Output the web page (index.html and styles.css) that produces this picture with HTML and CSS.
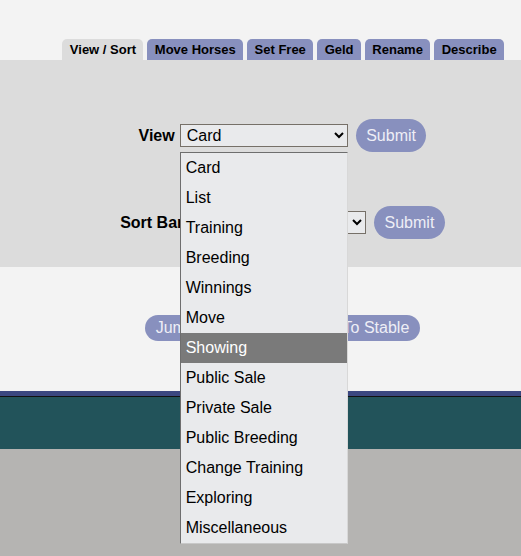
FILE: index.html
```html
<!DOCTYPE html>
<html>
<head>
<meta charset="utf-8">
<link rel="stylesheet" href="styles.css">
</head>
<body>
<div class="header">
  <nav class="tabs">
    <a class="tab active">View / Sort</a>
    <a class="tab">Move Horses</a>
    <a class="tab">Set Free</a>
    <a class="tab">Geld</a>
    <a class="tab">Rename</a>
    <a class="tab">Describe</a>
  </nav>
</div>
<div class="panel">
  <form class="row">
    <label class="label">View</label>
    <div class="select-wrap">
      <select class="select view-select">
        <option>Card</option>
      </select>
      <ul class="dropdown">
        <li>Card</li>
        <li>List</li>
        <li>Training</li>
        <li>Breeding</li>
        <li>Winnings</li>
        <li>Move</li>
        <li class="hl">Showing</li>
        <li>Public Sale</li>
        <li>Private Sale</li>
        <li>Public Breeding</li>
        <li>Change Training</li>
        <li>Exploring</li>
        <li>Miscellaneous</li>
      </ul>
    </div>
    <button type="button" class="btn">Submit</button>
  </form>
  <form class="row">
    <label class="label">Sort Barn</label>
    <select class="select sort-select">
      <option>Name</option>
    </select>
    <button type="button" class="btn">Submit</button>
  </form>
</div>
<div class="light">
  <div class="jump-row">
    <button type="button" class="btn small">Jump To Top</button>
    <button type="button" class="btn small">Back To Stable</button>
  </div>
</div>
<div class="band"></div>
<div class="teal"></div>
<div class="footer"></div>
</body>
</html>
```

FILE: styles.css
```css
html, body {
  margin: 0;
  padding: 0;
}
body {
  background: #b5b4b2;
  font-family: "Liberation Sans", Arial, sans-serif;
  color: #000;
}
.header {
  background: #f3f3f3;
  height: 60px;
  display: flex;
  align-items: flex-end;
  justify-content: flex-end;
  padding-right: 17px;
}
.tabs {
  display: flex;
  gap: 4px;
  align-items: flex-end;
}
.tab {
  display: block;
  height: 21px;
  line-height: 21px;
  padding: 0 7.4px;
  background: #8890be;
  border-radius: 5px 5px 0 0;
  font-weight: bold;
  font-size: 13px;
  color: #000;
}
.tab.active {
  background: #dcdcdc;
}
.panel {
  background: #dcdcdc;
  height: 207px;
  box-sizing: border-box;
  padding: 59px 0 0 44px;
  display: flex;
  flex-direction: column;
  gap: 54px;
}
.row {
  margin: 0;
  display: flex;
  align-items: center;
  justify-content: center;
  height: 33px;
}
.label {
  font-weight: bold;
  font-size: 16px;
  margin-right: 5px;
}
.select-wrap {
  position: relative;
  display: flex;
}
.select {
  box-sizing: border-box;
  height: 23px;
  border: 1px solid #767068;
  background-color: #e9eaec;
  border-radius: 0;
  font-family: "Liberation Sans", Arial, sans-serif;
  font-size: 16px;
  color: #000;
  padding: 0 2px;
  margin: 0;
}
.view-select {
  width: 168px;
}
.sort-select {
  width: 168px;
}
.btn {
  margin-left: 8px;
  height: 33px;
  padding: 0 10.5px;
  border: none;
  border-radius: 17px;
  background: #8890be;
  color: #eeeef6;
  font-family: "Liberation Sans", Arial, sans-serif;
  font-size: 16px;
}
.dropdown {
  position: absolute;
  left: 0;
  top: 28px;
  width: 168px;
  box-sizing: border-box;
  margin: 0;
  padding: 0;
  list-style: none;
  background: #e9eaec;
  border-left: 1px solid #6e6e6e;
  border-top: 1px solid #6e6e6e;
  border-right: 1px solid #d8d8d8;
  border-bottom: 1px solid #c8c8c8;
  z-index: 10;
}
.dropdown li {
  height: 30px;
  line-height: 30px;
  padding-left: 5px;
  font-size: 16px;
  color: #000;
  white-space: nowrap;
}
.dropdown li.hl {
  background: #7a7a7a;
  color: #fff;
}
.light {
  background: #f3f3f3;
  height: 124px;
  box-sizing: border-box;
  padding: 48px 0 0 44px;
}
.jump-row {
  display: flex;
  justify-content: center;
  gap: 36px;
}
.btn.small {
  margin-left: 0;
  height: 26px;
  border-radius: 13px;
}
.band {
  height: 5px;
  background: #3b4780;
  border-bottom: 1px solid #111;
}
.teal {
  height: 52px;
  background: #22535a;
}
.footer {
  background: #b5b4b2;
  height: 107px;
}
```
